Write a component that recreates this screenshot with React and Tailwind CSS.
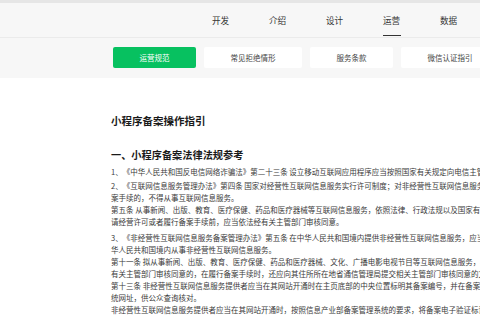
export default function App() {
  const nav = ["开发", "介绍", "设计", "运营", "数据", "社区"];
  const tabs = [
    { t: "运营规范", w: "w-[83px]", active: true },
    { t: "常见拒绝情形", w: "w-[98px]" },
    { t: "服务条款", w: "w-[83px]" },
    { t: "微信认证指引", w: "w-[98px]" },
  ];
  return (
    <div className="w-[480px] h-[320px] overflow-hidden bg-white font-['Noto_Sans_CJK_SC',sans-serif] text-[#353535] [text-spacing-trim:space-all]">
      <div className="h-[3px] bg-[#e6e6e6]" />
      <div className="h-[35px] bg-[#f7f7f7] border-b border-[#ebebeb] flex pl-[192px]">
        {nav.map((n) => (
          <div key={n} className="w-[57px] shrink-0 relative flex items-center justify-center text-[8.6px]">
            {n}
            {n === "运营" && (
              <div className="absolute bottom-[1px] left-1/2 -translate-x-1/2 w-[18px] h-[1.5px] bg-[#333]" />
            )}
          </div>
        ))}
      </div>
      <div className="h-[40px] bg-[#f7f7f7] flex gap-[8px] pl-[113px] pt-[9px]">
        {tabs.map((b) => (
          <div
            key={b.t}
            className={`${b.w} shrink-0 h-[21px] rounded-[2px] flex items-center justify-center text-[7.5px] ${b.active ? "bg-[#07c160] text-white" : "bg-white text-[#444]"}`}
          >
            {b.t}
          </div>
        ))}
      </div>
      <div className="pl-[111px] w-[624px]">
        <h1 className="mt-[36px] text-[10.5px] leading-[14px] font-bold text-[#1a1a1a]">小程序备案操作指引</h1>
        <h2 className="mt-[20px] text-[10.2px] leading-[14px] font-bold text-[#1a1a1a]">一、小程序备案法律法规参考</h2>
        <div className="mt-[4px] text-[7.5px] leading-[12px] text-[#3a3a3a]">
          <p className="mb-[2px]">1、《中华人民共和国反电信网络诈骗法》第二十三条 设立移动互联网应用程序应当按照国家有关规定向电信主管部门办理许可或者备案手续。</p>
          <p className="mb-[4px]">
            2、《互联网信息服务管理办法》第四条 国家对经营性互联网信息服务实行许可制度；对非经营性互联网信息服务实行备案制度。未取得许可或者未履行备案手续的，不得从事互联网信息服务。
            <br />
            第五条 从事新闻、出版、教育、医疗保健、药品和医疗器械等互联网信息服务，依照法律、行政法规以及国家有关规定须经有关主管部门审核同意的，在申请经营许可或者履行备案手续前，应当依法经有关主管部门审核同意。
          </p>
          <p>
            3、《非经营性互联网信息服务备案管理办法》第五条 在中华人民共和国境内提供非经营性互联网信息服务，应当依法履行备案手续。未经备案，不得在中华人民共和国境内从事非经营性互联网信息服务。
            <br />
            第十一条 拟从事新闻、出版、教育、医疗保健、药品和医疗器械、文化、广播电影电视节目等互联网信息服务，根据法律、行政法规以及国家有关规定应经有关主管部门审核同意的，在履行备案手续时，还应向其住所所在地省通信管理局提交相关主管部门审核同意的文件。
            <br />
            第十三条 非经营性互联网信息服务提供者应当在其网站开通时在主页底部的中央位置标明其备案编号，并在备案编号下方按要求链接信息产业部备案管理系统网址，供公众查询核对。
            <br />
            非经营性互联网信息服务提供者应当在其网站开通时，按照信息产业部备案管理系统的要求，将备案电子验证标识放置在其网站的指定目录下。
          </p>
        </div>
      </div>
    </div>
  );
}
